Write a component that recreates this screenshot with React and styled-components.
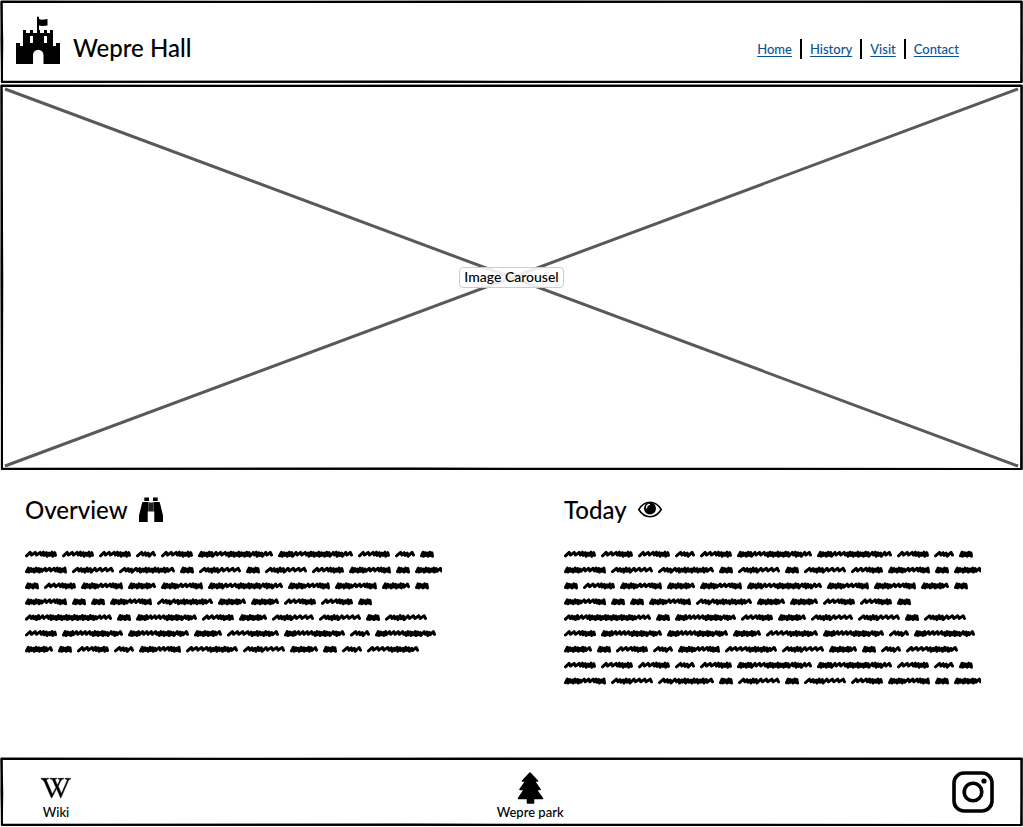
import React from "react";
import styled, { createGlobalStyle } from "styled-components";
import { FaWikipediaW } from "react-icons/fa";

const GlobalStyle = createGlobalStyle`
  * { box-sizing: border-box; }
  body {
    margin: 0;
    background: #fff;
    color: #000;
    font-family: Lato, "Open Sans", sans-serif;
    font-weight: 500;
  }
`;

const Page = styled.div`
  display: flex;
  flex-direction: column;
  min-height: 100vh;
`;

const Overlay = styled.svg`
  position: absolute;
  inset: 0;
  width: 100%;
  height: 100%;
  pointer-events: none;

  path {
    vector-effect: non-scaling-stroke;
  }
`;

/* Hand-drawn outline that stretches with the panel it surrounds. */
function SketchFrame({ height }) {
  const b = height - 2;
  const m = height / 2;
  return (
    <Overlay viewBox={`0 0 1000 ${height}`} preserveAspectRatio="none" aria-hidden="true">
      <g fill="none" stroke="#000" strokeWidth="2" strokeLinejoin="round">
        <path d={`M1.6 2 L500 1.4 L998.4 2 L998.8 ${m} L998.2 ${b} L600 ${b} L2 ${b - 0.6} L1.4 ${m} Z`} />
        <path d={`M1.4 1.6 L300 2 L998.8 1.6 L998.4 ${m} L998.8 ${b} L400 ${b - 0.4} L1.8 ${b} L2.2 ${m} Z`} />
      </g>
    </Overlay>
  );
}

const Header = styled.header`
  position: relative;
  display: flex;
  align-items: center;
  justify-content: space-between;
  min-height: 84px;
  padding: 0 56px 4px 15px;
`;

const Brand = styled.div`
  display: flex;
  align-items: flex-end;
  gap: 12px;
`;

const Title = styled.h1`
  margin: 0;
  font-size: 24px;
  line-height: 32px;
  font-weight: 500;
`;

const Nav = styled.nav`
  display: flex;
  align-items: center;
  padding-top: 18px;
`;

const NavItem = styled.span`
  display: flex;
  padding: 0 8px;
  line-height: 20px;

  & + & {
    border-left: 2px solid #000;
  }
`;

const NavLink = styled.a`
  color: #0b5394;
  font-size: 13px;
  text-decoration-thickness: 1px;
  text-underline-offset: 2px;
`;

const Hero = styled.section`
  position: relative;
  display: grid;
  place-items: center;
  min-height: 387px;
`;

const HeroLabel = styled.span`
  position: relative;
  padding: 0 4px 1px;
  border: 1px solid #ccc;
  border-radius: 4px;
  background: rgba(255, 255, 255, 0.88);
  font-size: 14px;
  line-height: 18px;
`;

const Main = styled.main`
  flex: 1;
  display: grid;
  grid-template-columns: 1fr 1fr;
  column-gap: 122px;
  padding: 23px 42px 24px 25px;
`;

const Article = styled.article`
  display: flex;
  flex-direction: column;
  gap: 20px;
`;

const Heading = styled.h2`
  display: flex;
  align-items: center;
  gap: 11px;
  margin: 0;
  font-size: 24px;
  line-height: 32px;
  font-weight: 500;
`;

const Scribble = styled.svg`
  display: block;
  width: 100%;
`;

const Footer = styled.footer`
  position: relative;
  display: grid;
  grid-template-columns: 18fr auto 17fr;
  align-items: center;
  min-height: 70px;
  padding: 0 29px 0 41px;
`;

const FooterLink = styled.a`
  display: flex;
  flex-direction: column;
  align-items: center;
  justify-self: ${(p) => p.$side};
  color: #000;
  font-size: 13px;
  line-height: 16px;
  text-decoration: none;
`;

const IconBox = styled.span`
  display: flex;
  align-items: center;
  height: 40px;
  padding-top: 8px;
`;

const WikiMark = styled(FaWikipediaW)`
  stroke: #000;
  stroke-width: 10px;
`;

function CastleIcon() {
  return (
    <svg width="46" height="48" viewBox="0 0 46 48" aria-hidden="true">
      <path
        fillRule="evenodd"
        d="M1 27h4v3h3V14h3v3h4v-3h3v3h4V1.500a1 1 0 0 1 2 0V3l3 .8 5.500-.8v6.500L27 10l-3-.6V14h1v3h4v-3h3v3h3v-3h3v16h3v-3h4v21H28.500V39a5.200 5.200 0 0 0-10.500 0v9H1ZM15 20v7h3v-7ZM29 20v7h3v-7Z"
      />
    </svg>
  );
}

function BinocularsIcon() {
  return (
    <svg width="24" height="26" viewBox="0 0 24 26" aria-hidden="true">
      <path d="M5.300.500h4.700V4H5.300ZM14 .500h4.700V4H14ZM3.500 5H9.500v9.500H8.700V25H0v-6.500L2.800 7ZM14.500 5H20.500l.7 2L24 18.500V25h-8.700V14.500h-.8Z" />
      <path fill="#222" d="M9.500 5.500h5v9h-5Z" />
    </svg>
  );
}

function EyeIcon() {
  return (
    <svg width="24" height="18" viewBox="0 0 24 18" aria-hidden="true">
      <path
        d="M.8 8.500C3.500 4 7.500 1.300 12 1.300S20.500 4 23.200 8.500C20.500 13 16.500 15.700 12 15.700S3.500 13 .8 8.500Z"
        fill="none"
        stroke="#000"
        strokeWidth="1.600"
      />
      <circle cx="12" cy="7.500" r="6" />
      <path d="M8.500 7c0-2 1.200-3.300 3-3.600" fill="none" stroke="#fff" strokeWidth="1.200" strokeLinecap="round" />
    </svg>
  );
}

function TreeIcon() {
  return (
    <svg width="28" height="32" viewBox="0 0 28 32" aria-hidden="true">
      <path
        d="M14 1 21.500 9h-3.300L24 17.500h-4L26.500 26.500h-9V31h-6v-4.500h-9L8.500 17.500H4L10 9H6.500Z"
        stroke="#000"
        strokeWidth="1.600"
        strokeLinejoin="round"
      />
    </svg>
  );
}

function InstagramIcon() {
  return (
    <svg width="42" height="42" viewBox="0 0 42 42" aria-hidden="true">
      <rect x="2" y="2" width="38" height="38" rx="10" fill="none" stroke="#000" strokeWidth="3.600" />
      <circle cx="21" cy="21" r="8.800" fill="none" stroke="#000" strokeWidth="3.600" />
      <circle cx="32" cy="10" r="2.600" />
    </svg>
  );
}

/* Scribbled words: "l" is a long loose stroke, "d" a short dense one. */
const WORDS = {
  A: [32, "lllddddd"],
  B: [20, "lddl"],
  C: [14, "ddddd"],
  D: [42, "ddddddllldddd"],
  E: [42, "lddddllll"],
  F: [28, "ddddddddl"],
  G: [56, "lddlddddddddddl"],
  H: [75, "dddddllldddddddddldddll"],
  I: [61, "ddddlllldddddddlddl"],
  J: [87, "ldddllddddddddddddddddddlll"],
  K: [52, "llllddddddddl"],
};

const LINES = [
  "AAABAHHABC",
  "DEGCECEADCF",
  "CADFDHDDFC",
  "DCCDGFFAAC",
  "JCIAFEECE",
  "AIIFKIBI",
  "FCABDKEFCBK",
];

const WORD_GAP = 5;

function wordPath(x, y, [width, pattern]) {
  const unit = { l: 4.6, d: 2.6 };
  const total = [...pattern].reduce((sum, c) => sum + unit[c], 0);
  const scale = (width - 3) / total;
  let px = x + 1.5;
  let d = `M${px.toFixed(1)} ${(y + 1.8).toFixed(1)}`;
  [...pattern].forEach((c, i) => {
    const w = unit[c] * scale;
    const top = c === "l" ? y - 1.6 : y - 1.8 + (i % 3) * 0.5;
    const bottom = c === "l" ? y + 1 : y + 2.2 - (i % 2) * 0.8;
    d += `L${(px + w * 0.75).toFixed(1)} ${top.toFixed(1)}L${(px + w).toFixed(1)} ${bottom.toFixed(1)}`;
    px += w;
  });
  return d;
}

function ScribbleText({ lines }) {
  const paths = lines.flatMap((line, row) => {
    let x = 0;
    return [...line].map((key) => {
      const path = wordPath(x, 8 + row * 15.85, WORDS[key]);
      x += WORDS[key][0] + WORD_GAP;
      return path;
    });
  });
  return (
    <Scribble viewBox={`0 0 417 ${lines.length * 16}`} role="img" aria-label="Placeholder text">
      <path d={paths.join("")} fill="none" stroke="#000" strokeWidth="3" strokeLinecap="round" strokeLinejoin="round" />
    </Scribble>
  );
}

const NAV = ["Home", "History", "Visit", "Contact"];

export default function App() {
  return (
    <Page>
      <GlobalStyle />
      <Header>
        <SketchFrame height={84} />
        <Brand>
          <CastleIcon />
          <Title>Wepre Hall</Title>
        </Brand>
        <Nav aria-label="Main">
          {NAV.map((name) => (
            <NavItem key={name}>
              <NavLink href={`#${name.toLowerCase()}`}>{name}</NavLink>
            </NavItem>
          ))}
        </Nav>
      </Header>
      <Hero>
        <SketchFrame height={387} />
        <Overlay viewBox="0 0 1023 387" preserveAspectRatio="none" aria-hidden="true">
          <path d="M5 5 1018 382M1018 5 5 382" fill="none" stroke="#595959" strokeWidth="3" />
        </Overlay>
        <HeroLabel>Image Carousel</HeroLabel>
      </Hero>
      <Main>
        <Article>
          <Heading>
            Overview
            <BinocularsIcon />
          </Heading>
          <ScribbleText lines={LINES} />
        </Article>
        <Article>
          <Heading>
            Today
            <EyeIcon />
          </Heading>
          <ScribbleText lines={[...LINES, ...LINES.slice(0, 2)]} />
        </Article>
      </Main>
      <Footer>
        <SketchFrame height={70} />
        <FooterLink href="#wiki" $side="start">
          <IconBox>
            <WikiMark size={30} aria-hidden="true" />
          </IconBox>
          Wiki
        </FooterLink>
        <FooterLink href="#park" $side="center">
          <IconBox>
            <TreeIcon />
          </IconBox>
          Wepre park
        </FooterLink>
        <FooterLink href="#instagram" $side="end" aria-label="Instagram">
          <InstagramIcon />
        </FooterLink>
      </Footer>
    </Page>
  );
}
